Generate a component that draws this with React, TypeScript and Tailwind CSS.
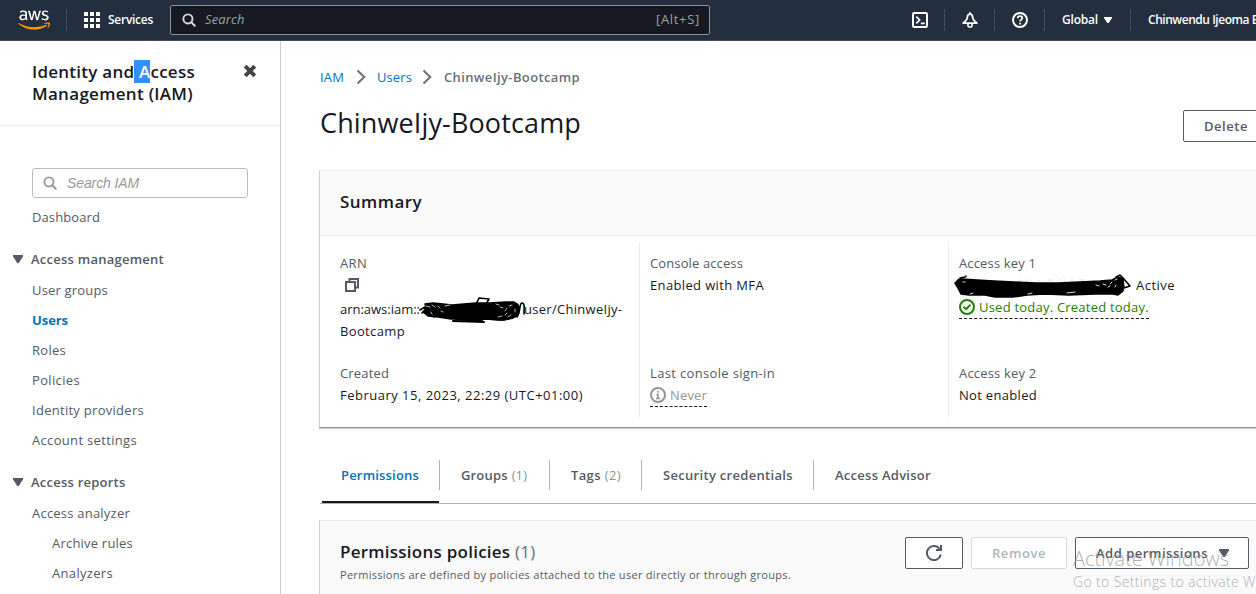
import type { ReactNode } from 'react';
import { FaAws } from 'react-icons/fa';

const HeaderDivider = () => <div className="h-[22px] w-px shrink-0 bg-[#414d5c]" />;

function Caret({ className }: { className: string }) {
  return (
    <svg viewBox="0 0 10 8" preserveAspectRatio="none" className={className} fill="currentColor">
      <path d="M0 0h10v1.2L5.8 8H4.2L0 1.2z" />
    </svg>
  );
}

function SearchIcon({ className }: { className: string }) {
  return (
    <svg viewBox="0 0 16 16" className={className} fill="none" stroke="currentColor" strokeWidth="2.2">
      <circle cx="6.8" cy="6.8" r="5.2" />
      <path d="M10.6 10.6l4 4" strokeLinecap="round" />
    </svg>
  );
}

function TopBar() {
  return (
    <header className="flex h-[41px] w-full shrink-0 items-center overflow-hidden border-b border-[#414d5c] bg-[#232f3e] text-[12px] font-semibold text-white">
      <div className="relative ml-[18px] h-[26px] w-8 shrink-0">
        <FaAws className="absolute top-0 left-0 h-[26px] w-8 [clip-path:inset(0_0_42%_0)]" />
        <FaAws className="absolute top-0 left-0 h-[26px] w-8 text-[#ff9900] [clip-path:inset(58%_0_0_0)]" />
      </div>
      <div className="ml-4">
        <HeaderDivider />
      </div>
      <div className="ml-[17px] grid shrink-0 grid-cols-3 gap-[2px]">
        {Array.from({ length: 9 }, (_, i) => (
          <span key={i} className="size-1 bg-white" />
        ))}
      </div>
      <span className="ml-2 w-[62px] shrink-0 tracking-[-0.27px]">Services</span>
      <div className="flex h-[30px] w-[540px] shrink-0 items-center rounded-[2px] border border-[#879596] bg-[#16191f] pr-[9px] pl-[11px] text-[13px] font-normal text-[#95a5a6]">
        <SearchIcon className="size-[14px] text-[#d5dbdb]" />
        <span className="ml-[9px] tracking-[0.14px] italic">Search</span>
        <span className="ml-auto tracking-[0.69px]">[Alt+S]</span>
      </div>
      <svg viewBox="0 0 16 16" className="ml-[202px] size-4 shrink-0" fill="none" stroke="currentColor" strokeWidth="2">
        <rect x="1" y="1" width="14" height="14" rx="1.2" />
        <path d="M4.3 4.6L7.6 8l-3.3 3.4M8.8 11.4h4" strokeWidth="1.7" />
      </svg>
      <div className="ml-4">
        <HeaderDivider />
      </div>
      <svg viewBox="0 0 16 16" className="ml-[17px] size-4 shrink-0" fill="none" stroke="currentColor" strokeWidth="2">
        <path d="M8 0.3v2M8 2.2C6.300 2.200 5.300 3.800 5.200 6c-.1 2.300-2.300 3.100-4 5.200h13.600c-1.700-2.100-3.900-2.900-4-5.200C10.700 3.800 9.700 2.200 8 2.200z" strokeWidth="1.8" strokeLinejoin="round" />
        <path d="M6 12v2.200L7 15h2l1-.800V12" strokeWidth="1.600" />
      </svg>
      <div className="ml-4">
        <HeaderDivider />
      </div>
      <svg viewBox="0 0 16 16" className="ml-[17px] size-4 shrink-0" fill="none" stroke="currentColor" strokeWidth="2">
        <circle cx="8" cy="8" r="7" />
        <path d="M5.700 6.200C5.800 3.500 10.300 3.600 10.300 6.100 10.300 7.800 8 7.600 8 9.600M8 10.800v1.800" strokeWidth="1.700" />
      </svg>
      <div className="ml-4">
        <HeaderDivider />
      </div>
      <span className="ml-[17px] w-9 tracking-[-0.19px]">Global</span>
      <Caret className="ml-[6px] h-[6px] w-2 shrink-0" />
      <div className="ml-[18px]">
        <HeaderDivider />
      </div>
      <span className="ml-[17px] tracking-[-0.46px] whitespace-nowrap">Chinwendu Ijeoma Ezeh</span>
    </header>
  );
}

function NavItem({ children, className }: { children: ReactNode; className: string }) {
  return <a className={`flex h-[30px] items-center pt-[2px] ${className}`}>{children}</a>;
}

function NavHeading({ children, className }: { children: ReactNode; className: string }) {
  return (
    <div className={`-ml-[19px] mt-3 flex h-[31px] items-center font-semibold ${className}`}>
      <Caret className="mr-2 -mt-px h-2 w-[10px]" />
      {children}
    </div>
  );
}

function SideNav() {
  return (
    <nav className="h-full w-[281px] shrink-0 border-r border-[#ccc] text-[13px] text-[#545b64]">
      <div className="flex h-[85px] justify-between border-b border-[#eaeded] pt-5 pr-[23px] pl-8">
        <h2 className="text-[17px] leading-[22px] font-semibold whitespace-nowrap text-[#16191f]">
          <span className="tracking-[0.25px]">
            Identity and<span className="bg-[#3390ff] text-white"> A</span>ccess
          </span>
          <br />
          <span className="tracking-[0.3px]">Management (IAM)</span>
        </h2>
        <svg viewBox="0 0 14 14" className="mt-[3px] size-[14px]" stroke="#444" strokeWidth="4">
          <path d="M2.200 2.200l9.600 9.600M11.800 2.200l-9.600 9.600" />
        </svg>
      </div>
      <div className="pt-[42px] pr-8 pl-8">
        <div className="mb-1 flex h-[30px] w-[216px] items-center rounded-[3px] border border-[#bbb] pl-[10px] text-[#999]">
          <SearchIcon className="size-[14px]" />
          <span className="ml-[10px] font-['Liberation_Sans',sans-serif] text-[14px] tracking-[-0.1px] italic">Search IAM</span>
        </div>
        <NavItem className="tracking-[0.1px]">Dashboard</NavItem>
        <NavHeading className="tracking-[0.25px]">Access management</NavHeading>
        <NavItem className="tracking-[0.18px]">User groups</NavItem>
        <NavItem className="font-bold tracking-[-0.07px] text-[#0073bb]">Users</NavItem>
        <NavItem className="tracking-[0.28px]">Roles</NavItem>
        <NavItem className="tracking-[0.35px]">Policies</NavItem>
        <NavItem className="tracking-[0.28px]">Identity providers</NavItem>
        <NavItem className="tracking-[0.33px]">Account settings</NavItem>
        <NavHeading className="tracking-[0.23px]">Access reports</NavHeading>
        <NavItem className="tracking-[0.22px]">Access analyzer</NavItem>
        <NavItem className="pl-5 tracking-[0.21px]">Archive rules</NavItem>
        <NavItem className="pl-5 tracking-[0.32px]">Analyzers</NavItem>
      </div>
    </nav>
  );
}

function Chevron() {
  return (
    <svg viewBox="0 0 10 16" className="-mt-px h-4 w-[10px]" fill="none" stroke="#687078" strokeWidth="2">
      <path d="M1.500 1.500L8.300 8l-6.800 6.500" />
    </svg>
  );
}

function Label({ children, className }: { children: ReactNode; className: string }) {
  return <div className={`text-[#545b64] ${className}`}>{children}</div>;
}

function ArnScribble() {
  return (
    <svg viewBox="0 0 120 40" className="absolute -top-[8px] left-[74px] h-10 w-[120px]" fill="none" stroke="#000" strokeLinecap="round" strokeLinejoin="round">
      <path d="M11 14l8-1 10 1 9 1 12-1 12-1 14 0 16-1 8 0 4 3 1 8-6 5-9 2-7 0-10-1-10 1-12-1-14 0-13-2-10-1-5-4 4-2z" fill="#000" strokeWidth="1.500" />
      <path d="M6 20l5-3 2 6M8 23l8-9 4 13 6-12 6 13 4-13M100 13c5 0 6 5 3 14 4-6 2-14 5-14s2 6 2 11M97 27c6 1 9-4 8-8M62 14l3-6 10 1-3 5M80 29l8 1 10-2" strokeWidth="1.600" />
      <path d="M39 31l31 1M42 29l26 1" strokeWidth="2" />
      <path d="M12 16l4 1M18 15l3 2M24 16l2 2M31 16l5-1M17 22l1 2M27 21l2 1M82 14l3 1M86 17l3 1M93 18l-2 3M98 15l-3 1M84 27l4-1M91 25l2-2M97 25l-3 2M101 19v3" stroke="#ccc" strokeWidth="0.900" />
    </svg>
  );
}

function KeyScribble() {
  return (
    <svg viewBox="0 0 190 36" className="absolute -top-[6px] -left-[7px] h-9 w-[190px]" fill="none" stroke="#000" strokeLinecap="round" strokeLinejoin="round">
      <path d="M10 11l15 1 17 1 20 1 22 1 22 0 22-1 20-1 12-1 6-3 4 1 1 7 0 6-5 4-5-1-18 0-26 1-24-1-18 1-14 2-18 0-10-2-16 0-8-1-3-6-3-5z" fill="#000" strokeWidth="1.600" />
      <path d="M9 11c-4 0-6 4-2 4l3 1M8 10l5-1 1-1M164 9l4-2 3 3 0 10M171 10l7 8-6 2-1-8M168 17l2 6-4 2M38 27l25 0" strokeWidth="1.600" />
      <path d="M76 26l4-1M115 25l8-1M18 26l3-1M11 14l2 0M144 17l3 1M151 16l3 1M156 19l2-1M160 14l-2 2M164 17l-1 2M163 12l2-1M68 12l2 1M75 12l1 1M79 12v1M86 12l2 1M97 12h3M107 12h2M112 12v1M119 12h2M128 12h4" stroke="#ddd" strokeWidth="1" />
    </svg>
  );
}

function Summary() {
  return (
    <section className="mt-7 h-[258px] border-t border-b border-l border-t-[#eaeded] border-b-[#879596] border-l-[#ccd1d1] shadow-[0_1px_1px_rgba(0,28,36,0.2)]">
      <h2 className="flex h-[65px] items-center border-b border-[#eaeded] bg-[#fafafa] pb-[2px] pl-5 text-[17px] font-semibold tracking-[0.45px] text-[#16191f]">Summary</h2>
      <div className="mt-[6px] grid h-[175px] grid-cols-[320px_309px_308px] leading-[22px] text-[#16191f] [&>*]:pt-[10px]">
        <div className="border-r border-[#eaeded] pl-5">
          <Label className="tracking-[0.32px]">ARN</Label>
          <div className="flex h-6 items-center pb-[2px] pl-[5px]">
            <svg viewBox="0 0 14 14" className="size-[14px]" fill="none" stroke="#545b64" strokeWidth="2">
              <path d="M1 4h9v9H1zM4.500 4V1H13v8.500h-3" />
            </svg>
          </div>
          <div className="relative flex whitespace-nowrap">
            <span className="w-[184px] tracking-[-0.02px]">arn:aws:iam::</span>
            <span className="tracking-[0.29px]">user/ChinweIjy-</span>
            <ArnScribble />
          </div>
          <div className="tracking-[0.36px]">Bootcamp</div>
          <Label className="mt-5 tracking-[0.16px]">Created</Label>
          <div className="tracking-[0.49px]">February 15, 2023, 22:29 (UTC+01:00)</div>
        </div>
        <div className="border-r border-[#eaeded] pl-[10px]">
          <Label className="tracking-[0.12px]">Console access</Label>
          <div className="tracking-[0.36px]">Enabled with MFA</div>
          <Label className="mt-[66px] tracking-[0.34px]">Last console sign-in</Label>
          <div className="flex h-[23px] w-[57px] items-center border-b border-dashed border-[#16191f] text-[#959595]">
            <svg viewBox="0 0 16 16" className="mr-1 size-4" fill="none" stroke="currentColor" strokeWidth="2">
              <circle cx="8" cy="8" r="7" />
              <path d="M8 3.700v2M6.300 7.500H8v3.500M6 11.500h4.200" strokeWidth="1.600" />
            </svg>
            <span className="tracking-[0.16px]">Never</span>
          </div>
        </div>
        <div className="pl-[10px]">
          <Label className="tracking-[0.15px]">Access key 1</Label>
          <div className="relative pl-[177px] tracking-[0.47px]">
            <KeyScribble />
            Active
          </div>
          <div className="flex h-[23px] w-[190px] items-center border-b border-dashed border-[#16191f] whitespace-nowrap text-[#1d8102]">
            <svg viewBox="0 0 16 16" className="mr-1 size-4 shrink-0" fill="none" stroke="currentColor" strokeWidth="2">
              <circle cx="8" cy="8" r="7" />
              <path d="M4.500 7.800l2.600 2.400 4.300-4.400" />
            </svg>
            <span className="tracking-[0.22px]">Used today. Created today.</span>
          </div>
          <Label className="mt-[43px] tracking-[0.17px]">Access key 2</Label>
          <div className="tracking-[0.31px]">Not enabled</div>
        </div>
      </div>
    </section>
  );
}

function Tab({ children, className }: { children: ReactNode; className: string }) {
  return <div className={`flex h-[30px] shrink-0 items-center border-[#aab7b8] pt-[2px] pl-[21px] ${className}`}>{children}</div>;
}

function Tabs() {
  return (
    <div className="ml-px flex h-[76px] border-b border-[#aab7b8] pt-8 font-semibold text-[#545b64]">
      <div className="relative">
        <Tab className="w-[120px] border-r tracking-[0.19px] text-[#0073bb]">Permissions</Tab>
        <div className="absolute top-[41px] left-[2px] h-[2px] w-[117px] bg-[#16191f]" />
      </div>
      <Tab className="w-[110px] border-r tracking-[0.16px]">
        Groups<span className="ml-1 font-normal text-[#879596]">(1)</span>
      </Tab>
      <Tab className="w-[92px] border-r tracking-[0.35px]">
        Tags<span className="ml-1 font-normal text-[#879596]">(2)</span>
      </Tab>
      <Tab className="w-[172px] border-r tracking-[0.31px]">Security credentials</Tab>
      <Tab className="tracking-[0.27px]">Access Advisor</Tab>
    </div>
  );
}

function Permissions() {
  return (
    <section className="mt-4 flex h-[90px] border-t border-l border-t-[#eaeded] border-l-[#ccd1d1] bg-[#fafafa]">
      <div className="pt-5 pl-5 whitespace-nowrap">
        <h2 className="text-[17px] leading-[22px] font-semibold tracking-[0.25px] text-[#16191f]">
          Permissions policies <span className="font-normal text-[#687078]">(1)</span>
        </h2>
        <p className="mt-[3px] text-[11px] leading-[18px] tracking-[0.29px] text-[#545b64]">
          Permissions are defined by policies attached to the user directly or through groups.
        </p>
      </div>
      <div className="mt-4 mr-[7px] ml-auto flex h-8 gap-2 font-semibold text-[#545b64]">
        <button className="flex w-[58px] items-center justify-center rounded-[2px] border border-[#545b64] bg-white">
          <svg viewBox="0 0 16 16" className="size-4" fill="none" stroke="currentColor" strokeWidth="2">
            <path d="M14.800 9.500A7 7 0 1 1 13.500 3.800" />
            <path d="M15 0v5h-5" />
          </svg>
        </button>
        <button className="w-24 rounded-[2px] border border-[#d5dbdb] bg-white pt-px tracking-[0.57px] text-[#aab7b8]">Remove</button>
        <button className="flex w-[174px] items-center rounded-[2px] border border-[#545b64] bg-white pt-px pl-5 tracking-[0.52px] whitespace-nowrap">
          Add permissions
          <Caret className="-mt-px ml-[11px] h-2 w-[10px]" />
        </button>
      </div>
    </section>
  );
}

export default function App() {
  return (
    <div className="relative flex h-[594px] w-[1256px] flex-col overflow-hidden bg-white font-['Open_Sans',sans-serif] text-[13px]">
      <TopBar />
      <div className="flex min-h-0 flex-1">
        <SideNav />
        <main className="min-w-0 flex-1 overflow-hidden pl-[38px]">
          <div className="mt-[26px] ml-px flex h-5 items-center pt-px text-[#0073bb]">
            <span className="w-9 tracking-[0.15px]">IAM</span>
            <Chevron />
            <span className="ml-[11px] w-[45px] tracking-[0.1px]">Users</span>
            <Chevron />
            <span className="ml-3 font-semibold tracking-[0.37px] text-[#687078]">ChinweIjy-Bootcamp</span>
          </div>
          <div className="mt-[23px] flex h-8 items-center">
            <h1 className="ml-px pb-[7px] text-[27px] leading-8 tracking-[0.13px] text-[#16191f]">ChinweIjy-Bootcamp</h1>
            <button className="-mr-4 ml-auto h-8 w-[89px] shrink-0 rounded-[2px] border border-[#545b64] pt-px pr-[3px] font-semibold tracking-[0.54px] text-[#545b64]">Delete</button>
          </div>
          <Summary />
          <Tabs />
          <Permissions />
        </main>
      </div>
      <div className="pointer-events-none absolute top-[547px] left-[1073px] font-light whitespace-nowrap text-[#8a8a8a]/70">
        <div className="text-[20px] leading-6 tracking-[-0.06px]">Activate Windows</div>
        <div className="text-[14px] leading-[22px] tracking-[0.36px]">Go to Settings to activate Windows.</div>
      </div>
    </div>
  );
}
